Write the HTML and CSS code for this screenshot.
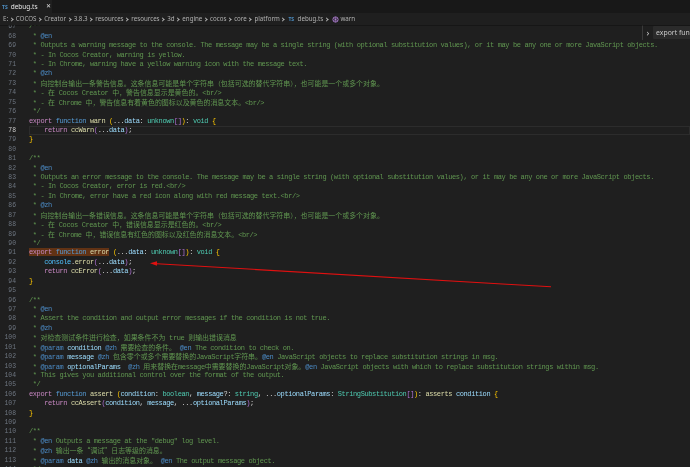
FILE: index.html
```html
<!DOCTYPE html>
<html lang="en">
<head>
<meta charset="utf-8">
<title>debug.ts</title>
<link rel="stylesheet" href="styles.css">
</head>
<body>
<div class="window">
  <div class="tabbar">
    <div class="tab"><span class="ts">TS</span><span class="tabname">debug.ts</span><span class="close">✕</span></div>
  </div>
  <div class="crumbs">
    <span>E:</span><i></i><span>COCOS</span><i></i><span>Creator</span><i></i><span>3.8.3</span><i></i><span>resources</span><i></i><span>resources</span><i></i><span>3d</span><i></i><span>engine</span><i></i><span>cocos</span><i></i><span>core</span><i></i><span>platform</span><i></i><span class="ts">TS</span><span>debug.ts</span><i></i>
    <svg class="fn-icon" viewBox="0 0 8 8"><circle cx="4" cy="4" r="3" fill="none" stroke="#b180d7" stroke-width="1"/><path d="M1.5 2.5 6.5 5.5M1.5 5.5 6.5 2.5M4 1v6" stroke="#b180d7" stroke-width=".7"/></svg>
    <span>warn</span>
  </div>
  <div class="editor">
    <div class="ln first"><span class="no">67</span><span class="cd c">/**</span></div>
    <div class="ln"><span class="no">68</span><span class="cd c"> * <b>@en</b></span></div>
    <div class="ln"><span class="no">69</span><span class="cd c"> * Outputs a warning message to the console. The message may be a single string (with optional substitution values), or it may be any one or more JavaScript objects.</span></div>
    <div class="ln"><span class="no">70</span><span class="cd c"> * - In Cocos Creator, warning is yellow.</span></div>
    <div class="ln"><span class="no">71</span><span class="cd c"> * - In Chrome, warning have a yellow warning icon with the message text.</span></div>
    <div class="ln"><span class="no">72</span><span class="cd c"> * <b>@zh</b></span></div>
    <div class="ln"><span class="no">73</span><span class="cd c"> * <span class="z">向控制台输出一条警告信息。这条信息可能是单个字符串（包括可选的替代字符串），也可能是一个或多个对象。</span></span></div>
    <div class="ln"><span class="no">74</span><span class="cd c"> * - <span class="z">在</span> Cocos Creator <span class="z">中，警告信息显示是黄色的。</span>&lt;br/&gt;</span></div>
    <div class="ln"><span class="no">75</span><span class="cd c"> * - <span class="z">在</span> Chrome <span class="z">中，警告信息有着黄色的图标以及黄色的消息文本。</span>&lt;br/&gt;</span></div>
    <div class="ln"><span class="no">76</span><span class="cd c"> */</span></div>
    <div class="ln"><span class="no">77</span><span class="cd"><span class="k">export</span> <span class="s">function</span> <span class="f">warn</span> <span class="y">(</span>...<span class="p">data</span>: <span class="t">unknown</span><span class="v">[]</span><span class="y">)</span>: <span class="t">void</span> <span class="y">{</span></span></div>
    <div class="ln cur"><span class="no">78</span><span class="cd">    <span class="k">return</span> <span class="f">ccWarn</span><span class="v">(</span>...<span class="p">data</span><span class="v">)</span>;</span></div>
    <div class="ln"><span class="no">79</span><span class="cd"><span class="y">}</span></span></div>
    <div class="ln"><span class="no">80</span><span class="cd"> </span></div>
    <div class="ln"><span class="no">81</span><span class="cd c">/**</span></div>
    <div class="ln"><span class="no">82</span><span class="cd c"> * <b>@en</b></span></div>
    <div class="ln"><span class="no">83</span><span class="cd c"> * Outputs an error message to the console. The message may be a single string (with optional substitution values), or it may be any one or more JavaScript objects.</span></div>
    <div class="ln"><span class="no">84</span><span class="cd c"> * - In Cocos Creator, error is red.&lt;br/&gt;</span></div>
    <div class="ln"><span class="no">85</span><span class="cd c"> * - In Chrome, error have a red icon along with red message text.&lt;br/&gt;</span></div>
    <div class="ln"><span class="no">86</span><span class="cd c"> * <b>@zh</b></span></div>
    <div class="ln"><span class="no">87</span><span class="cd c"> * <span class="z">向控制台输出一条错误信息。这条信息可能是单个字符串（包括可选的替代字符串），也可能是一个或多个对象。</span></span></div>
    <div class="ln"><span class="no">88</span><span class="cd c"> * - <span class="z">在</span> Cocos Creator <span class="z">中，错误信息显示是红色的。</span>&lt;br/&gt;</span></div>
    <div class="ln"><span class="no">89</span><span class="cd c"> * - <span class="z">在</span> Chrome <span class="z">中，错误信息有红色的图标以及红色的消息文本。</span>&lt;br/&gt;</span></div>
    <div class="ln"><span class="no">90</span><span class="cd c"> */</span></div>
    <div class="ln"><span class="no">91</span><span class="cd"><span class="hl"><span class="k">export</span> <span class="s">function</span> <span class="f">error</span></span> <span class="y">(</span>...<span class="p">data</span>: <span class="t">unknown</span><span class="v">[]</span><span class="y">)</span>: <span class="t">void</span> <span class="y">{</span></span></div>
    <div class="ln"><span class="no">92</span><span class="cd">    <span class="o">console</span>.<span class="f">error</span><span class="v">(</span>...<span class="p">data</span><span class="v">)</span>;</span></div>
    <div class="ln"><span class="no">93</span><span class="cd">    <span class="k">return</span> <span class="f">ccError</span><span class="v">(</span>...<span class="p">data</span><span class="v">)</span>;</span></div>
    <div class="ln"><span class="no">94</span><span class="cd"><span class="y">}</span></span></div>
    <div class="ln"><span class="no">95</span><span class="cd"> </span></div>
    <div class="ln"><span class="no">96</span><span class="cd c">/**</span></div>
    <div class="ln"><span class="no">97</span><span class="cd c"> * <b>@en</b></span></div>
    <div class="ln"><span class="no">98</span><span class="cd c"> * Assert the condition and output error messages if the condition is not true.</span></div>
    <div class="ln"><span class="no">99</span><span class="cd c"> * <b>@zh</b></span></div>
    <div class="ln"><span class="no">100</span><span class="cd c"> * <span class="z">对检查测试条件进行检查，如果条件不为</span> true <span class="z">则输出错误消息</span></span></div>
    <div class="ln"><span class="no">101</span><span class="cd c"> * <b>@param</b> <u>condition</u> <b>@zh</b> <span class="z">需要检查的条件。</span> <b>@en</b> The condition to check on.</span></div>
    <div class="ln"><span class="no">102</span><span class="cd c"> * <b>@param</b> <u>message</u> <b>@zh</b> <span class="z">包含零个或多个需要替换的</span>JavaScript<span class="z">字符串。</span><b>@en</b> JavaScript objects to replace substitution strings in msg.</span></div>
    <div class="ln"><span class="no">103</span><span class="cd c"> * <b>@param</b> <u>optionalParams</u>  <b>@zh</b> <span class="z">用来替换在</span>message<span class="z">中需要替换的</span>JavaScript<span class="z">对象。</span><b>@en</b> JavaScript objects with which to replace substitution strings within msg.</span></div>
    <div class="ln"><span class="no">104</span><span class="cd c"> * This gives you additional control over the format of the output.</span></div>
    <div class="ln"><span class="no">105</span><span class="cd c"> */</span></div>
    <div class="ln"><span class="no">106</span><span class="cd"><span class="k">export</span> <span class="s">function</span> <span class="f">assert</span> <span class="y">(</span><span class="p">condition</span>: <span class="t">boolean</span>, <span class="p">message</span>?: <span class="t">string</span>, ...<span class="p">optionalParams</span>: <span class="t">StringSubstitution</span><span class="v">[]</span><span class="y">)</span>: <span class="f">asserts</span> <span class="p">condition</span> <span class="y">{</span></span></div>
    <div class="ln"><span class="no">107</span><span class="cd">    <span class="k">return</span> <span class="f">ccAssert</span><span class="v">(</span><span class="p">condition</span>, <span class="p">message</span>, ...<span class="p">optionalParams</span><span class="v">)</span>;</span></div>
    <div class="ln"><span class="no">108</span><span class="cd"><span class="y">}</span></span></div>
    <div class="ln"><span class="no">109</span><span class="cd"> </span></div>
    <div class="ln"><span class="no">110</span><span class="cd c">/**</span></div>
    <div class="ln"><span class="no">111</span><span class="cd c"> * <b>@en</b> Outputs a message at the "debug" log level.</span></div>
    <div class="ln"><span class="no">112</span><span class="cd c"> * <b>@zh</b> <span class="z">输出一条“调试”日志等级的消息。</span></span></div>
    <div class="ln"><span class="no">113</span><span class="cd c"> * <b>@param</b> <u>data</u> <b>@zh</b> <span class="z">输出的消息对象。</span> <b>@en</b> The output message object.</span></div>
    <div class="ln"><span class="no">114</span><span class="cd c"> */</span></div>
  </div>
  <div class="hover"><span class="chev">›</span><span class="hover-text">export function warn</span></div>
  <svg class="arrow" viewBox="0 0 690 467">
    <path d="M157 263.7 551 286.8" stroke="#e01010" stroke-width="1.1" fill="none"/>
    <path d="M150 263.2 157 261.2 157 265.8Z" fill="#e01010"/>
  </svg>
</div>
</body>
</html>
```
FILE: styles.css
```css
* { box-sizing: border-box; }
html, body { margin: 0; height: 100%; background: #1f1f1f; }
.window {
  position: relative;
  width: 690px;
  height: 467px;
  overflow: hidden;
  display: flex;
  flex-direction: column;
  background: #1f1f1f;
  filter: blur(0.25px);
}
.tabbar { flex: none; height: 13px; background: #181818; display: flex; }
.tab {
  width: 52px;
  display: flex;
  align-items: center;
  padding-left: 2px;
  background: #1f1f1f;
  color: #e4e4e4;
  font: 6.5px/13px "Noto Sans", sans-serif;
}
.ts { color: #4d8fc4; font: bold 5px "Noto Sans", sans-serif; margin-right: 3px; }
.tabname { width: 35px; }
.close { font-size: 6px; color: #e0e0e0; }
.crumbs {
  flex: none;
  height: 12px;
  display: flex;
  align-items: center;
  padding-left: 3px;
  color: #b0b0b0;
  font: 6.2px/12px "Noto Sans", sans-serif;
  background: #1f1f1f;
  box-shadow: 0 1px 0 rgba(10, 10, 10, 0.45);
  position: relative;
  z-index: 1;
}
.crumbs i {
  width: 3px;
  height: 3px;
  margin: 0 3px 0 1.7px;
  border-top: 0.7px solid #b4b4b4;
  border-right: 0.7px solid #b4b4b4;
  transform: rotate(45deg);
}
.crumbs .ts { margin: 0 3.5px 0 1px; }
.fn-icon { width: 7px; height: 7px; margin: 0 1.5px 0 1px; }
.editor {
  flex: 1;
  min-height: 0;
  overflow: hidden;
  font-family: "Liberation Mono", "Noto Sans CJK SC", monospace;
  font-size: 7px;
  color: #d4d4d4;
}
.ln {
  display: flex;
  height: 9.43px;
  line-height: 9.43px;
  white-space: pre;
}
.first { margin-top: -2.7px; }
.no {
  flex: none;
  width: 16px;
  margin-right: 13px;
  text-align: right;
  color: #6e7681;
  font-size: 6.4px;
}
.cd { letter-spacing: -0.39px; }
.cur .no { color: #cccccc; }
.cur .cd { flex: 1; box-shadow: inset 0 0 0 1px #2c2c2c; }
.c { color: #609650; }
.c b { color: #4b8ac4; font-weight: normal; }
.c u { color: #9cdcfe; text-decoration: none; }
.z { font-family: "Noto Sans CJK SC", sans-serif; letter-spacing: 0; font-size: 6.95px; }
.k { color: #c586c0; }
.s { color: #569cd6; }
.f { color: #dcdcaa; }
.p { color: #9cdcfe; }
.t { color: #4ec9b0; }
.o { color: #4fc1ff; }
.y { color: #ffc800; }
.v { color: #b072d6; }
.hl { background: #613214; }
.hover {
  position: absolute;
  top: 25px;
  right: 0;
  width: 48px;
  height: 15px;
  display: flex;
  align-items: center;
  background: #1f1f1f;
  border-left: 1px solid #3a3a3a;
}
.chev { width: 10px; text-align: center; color: #cccccc; font: 9px/14px "Noto Sans", sans-serif; }
.hover-text {
  flex: 1;
  height: 13px;
  overflow: hidden;
  white-space: nowrap;
  background: #2b2b2b;
  padding-left: 3px;
  color: #c8c8c8;
  font: 6.9px/13px "Noto Sans", sans-serif;
  border-radius: 1px 0 0 1px;
}
.arrow { position: absolute; inset: 0; width: 690px; height: 467px; pointer-events: none; }
```
